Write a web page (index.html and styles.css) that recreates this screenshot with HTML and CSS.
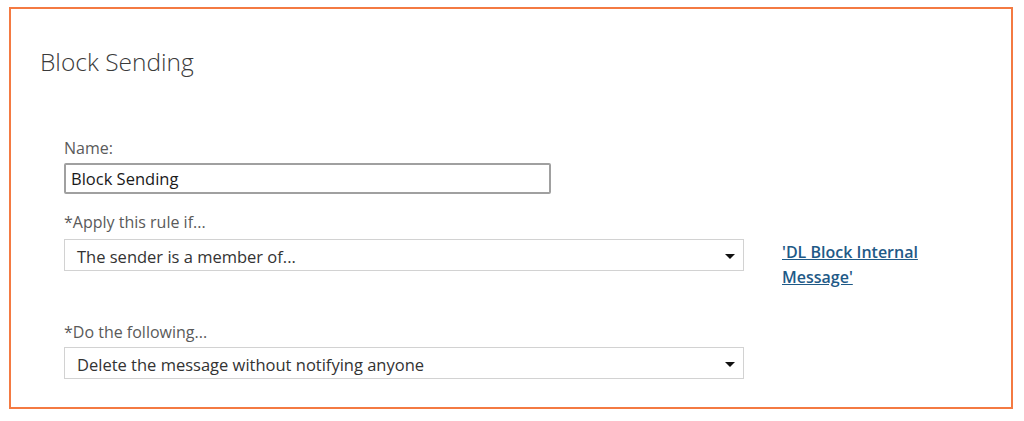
FILE: index.html
```html
<!DOCTYPE html>
<html>
<head>
<meta charset="utf-8">
<link rel="stylesheet" href="styles.css">
</head>
<body>
<div class="frame">
  <h1 class="title">Block Sending</h1>
  <div class="form">
    <label class="label">Name:</label>
    <div class="textbox">Block Sending</div>
    <label class="label label-apply">*Apply this rule if...</label>
    <div class="row">
      <div class="select">
        <span class="select-text">The sender is a member of...</span>
        <span class="arrow"></span>
      </div>
      <a class="link" href="#">'DL Block Internal Message'</a>
    </div>
    <label class="label label-do">*Do the following...</label>
    <div class="select">
      <span class="select-text">Delete the message without notifying anyone</span>
      <span class="arrow"></span>
    </div>
  </div>
</div>
</body>
</html>
```
FILE: styles.css
```css
html, body {
  margin: 0;
  padding: 0;
  background: #ffffff;
}
body {
  font-family: "Open Sans", "Noto Sans", sans-serif;
  color: #333333;
}
.frame {
  box-sizing: border-box;
  width: 1004px;
  height: 402px;
  margin: 7px 0 0 9px;
  border: 2px solid #f47a42;
  padding: 38px 0 0 29px;
}
.title {
  margin: 0;
  font-weight: 300;
  font-size: 24.5px;
  line-height: 30px;
  color: #3a3a3a;
}
.form {
  margin: 61px 0 0 24px;
  display: flex;
  flex-direction: column;
  align-items: flex-start;
}
.label {
  display: block;
  font-size: 16px;
  line-height: 20px;
  color: #5a5a5a;
  margin-bottom: 5px;
}
.label-apply { margin-top: 18px; margin-bottom: 7px; }
.label-do { margin-top: 33px; margin-bottom: 5px; }
.textbox {
  box-sizing: border-box;
  width: 487px;
  height: 31px;
  border: 2px solid #a0a0a0;
  border-radius: 2px;
  padding: 0 5px;
  font-size: 16.5px;
  line-height: 27px;
  color: #1a1a1a;
}
.row {
  display: flex;
  align-items: flex-start;
  gap: 38px;
}
.select {
  box-sizing: border-box;
  width: 680px;
  height: 32px;
  border: 1px solid #d2d2d2;
  display: flex;
  align-items: center;
  justify-content: space-between;
  padding: 2px 8px 0 12px;
  font-size: 16.5px;
  color: #333333;
}
.arrow {
  width: 0;
  height: 0;
  border-left: 5px solid transparent;
  border-right: 5px solid transparent;
  border-top: 5px solid #111111;
}
.link {
  width: 150px;
  font-size: 16px;
  font-weight: 600;
  line-height: 24.5px;
  margin-top: 1px;
  color: #1f5a87;
  text-decoration: underline;
}
```
